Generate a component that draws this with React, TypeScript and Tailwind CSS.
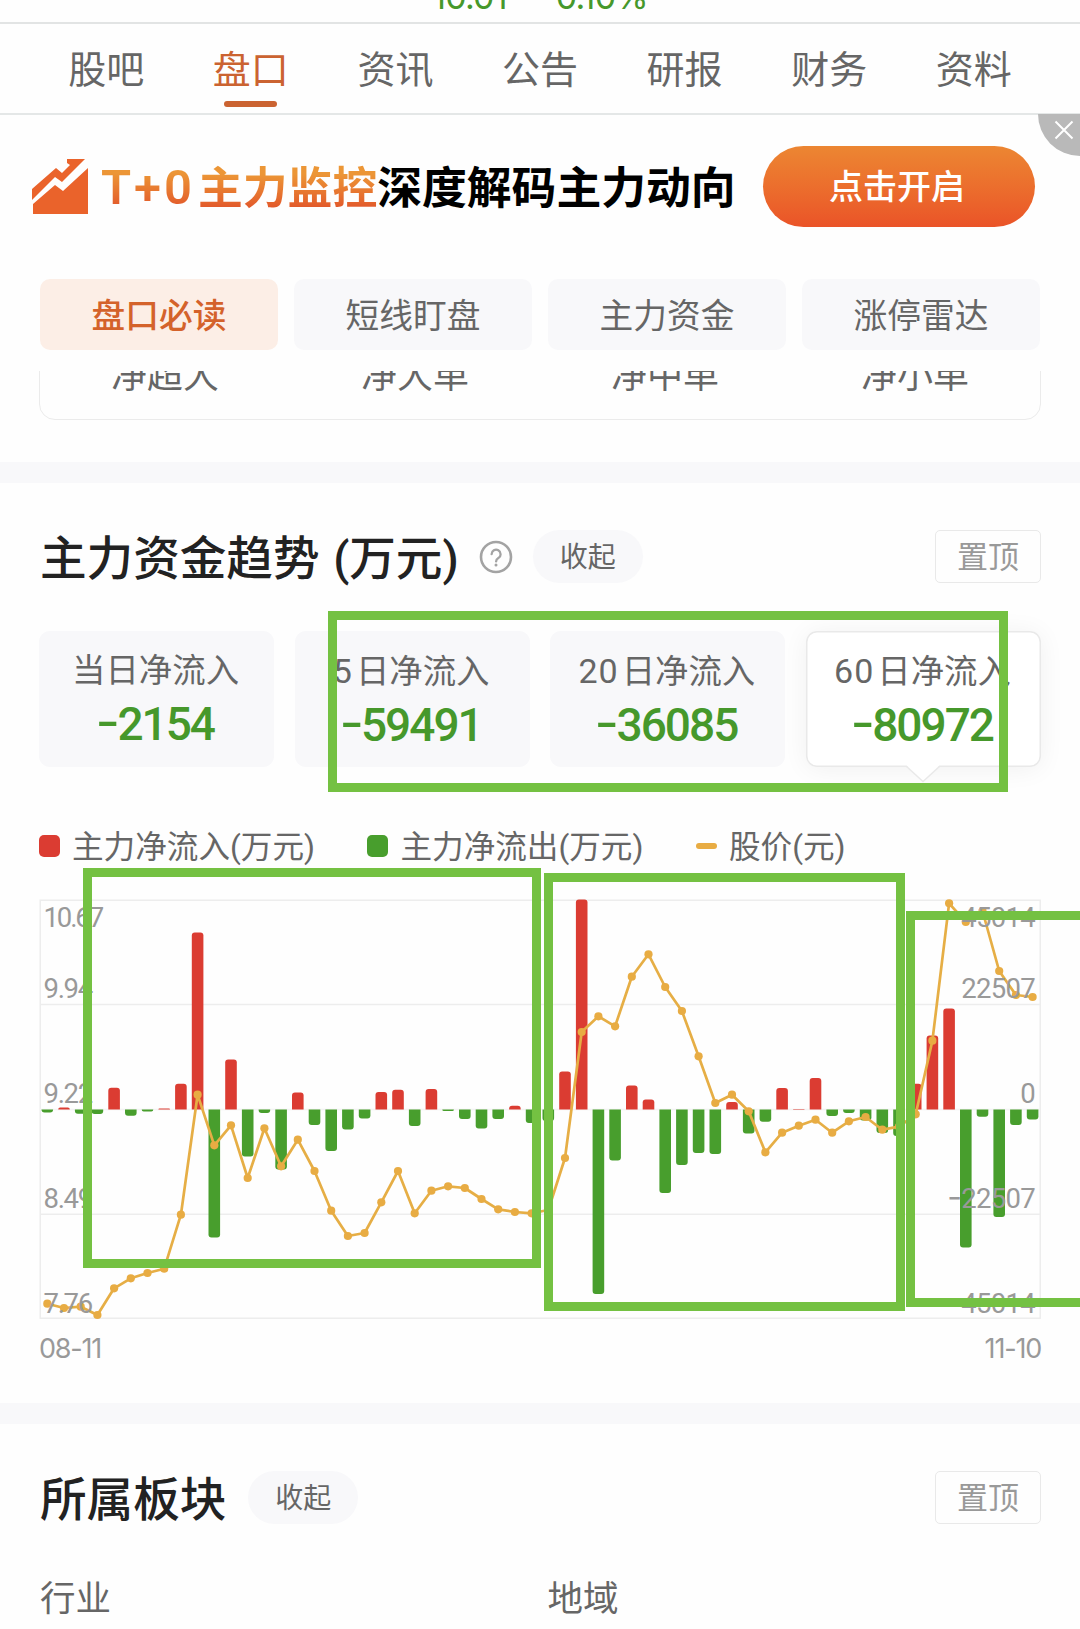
import clsx from "clsx";

const tabs = ["股吧", "盘口", "资讯", "公告", "研报", "财务", "资料"];
const filters = ["盘口必读", "短线盯盘", "主力资金", "涨停雷达"];
const orderTypes = ["净超大", "净大单", "净中单", "净小单"];

const periods = [
  { days: "", label: "当日净流入", value: "2154" },
  { days: "5", label: "日净流入", value: "59491" },
  { days: "20", label: "日净流入", value: "36085" },
  { days: "60", label: "日净流入", value: "80972" },
];

// Bar heights in px, positive = inflow
const flows = [
  -3, 2, -4.3, -4.7, 21.7, -6.3, -2, 1, 25.7, 177, -128, 50, -47, -3.7, -60, 17, -15.7, -41.5, -20, -9,
  17.5, 19.7, -16.7, 20.5, -1.5, -9.7, -19, -9.7, 3.7, -13.5, -11.7, 38, 210, -184.5, -51, 24, 10, -83.5, -55.5, -43.5,
  -44.5, 7.5, -24, -12.3, 21.5, 0.5, 31.3, -6.5, -3.7, -11, -23.5, -26.5, 25.7, 74, 101, -138, -7.3, -107.5, -15.5, -10,
];

// Distance of the price from the chart's top edge
const prices = [
  403.7, 408, 406.7, 415, 388.3, 378.3, 373, 368.7, 314.7, 194.7, 245.3, 225.3, 278, 228.3, 266.3, 239.7, 271, 310.7, 336, 333,
  302.3, 271, 313.3, 290.7, 286.3, 288, 299, 309.3, 312, 313.3, 310, 258, 132, 116.3, 126.3, 76.7, 54.3, 87, 111, 156.3,
  203, 194.7, 211.3, 252.3, 232.7, 225.7, 219.7, 232.7, 221.3, 217, 229.7, 226.7, 214.3, 140.7, 3.3, 22, 11, 71, 95, 97,
];

const leftAxis = ["10.67", "9.94", "9.22", "8.49", "7.76"];
const rightAxis = ["45014", "22507", "0", "-22507", "-45014"];
const labelY = [26.7, 97.5, 202.6, 307.6, 412.6];

const barX = (i: number) => 7.3 + i * 16.7;
const ZERO = 209.4;

function barPath(x: number, v: number) {
  const r = Math.min(3, Math.abs(v));
  const d = v > 0 ? -1 : 1;
  const end = ZERO - v;
  return `M${x - 5.8} ${ZERO}V${end - d * r}Q${x - 5.8} ${end} ${x - 5.8 + r} ${end}H${x + 5.8 - r}Q${x + 5.8} ${end} ${x + 5.8} ${end - d * r}V${ZERO}Z`;
}

function FundChart() {
  return (
    <svg width="1000" height="418" viewBox="0 0 1000 418" className="block overflow-visible">
      <g fill="none" stroke="#ededed" strokeWidth="1.5">
        <rect x="0.2" y="0.2" width="1000" height="418" />
        <path d="M0 104.4H1000M0 314.2H1000" />
        <path d={`M0 ${ZERO}H1000`} stroke="#f4f4f4" />
      </g>
      {flows.map((v, i) => (
        <path key={i} d={barPath(barX(i), v)} fill={v > 0 ? "#db3c32" : "#489e2d"} />
      ))}
      <polyline
        points={prices.map((y, i) => `${barX(i)},${y}`).join(" ")}
        fill="none"
        stroke="#e6ae45"
        strokeWidth="2.7"
        strokeLinejoin="round"
      />
      {prices.map((y, i) => (
        <circle key={i} cx={barX(i)} cy={y} r="4.1" fill="#e8ac43" />
      ))}
      <g fill="#999999" fontSize="27.5">
        {leftAxis.map((t, i) => (
          <text key={t} x="3.5" y={labelY[i]} letterSpacing={i === 0 ? "-2.1" : "-1.3"}>{t}</text>
        ))}
        {rightAxis.map((t, i) => (
          <text key={t} x="995" y={labelY[i]} textAnchor="end" letterSpacing="-0.7">
            {t.startsWith("-") ? <tspan className="font-[Inter]" fontSize="32">-</tspan> : null}
            {t.replace("-", "")}
          </text>
        ))}
      </g>
    </svg>
  );
}

function SectionHeader({ title, help }: { title: string; help?: boolean }) {
  return (
    <div className="flex h-[53px] items-center">
      <h2 className="ml-px pt-[5px] text-[46.6px] leading-none font-medium whitespace-pre text-[#222] [word-spacing:2px]">{title}</h2>
      {help && (
        <svg width="34" height="34" viewBox="0 0 34 34" className="ml-[20px]" fill="none" stroke="#a3a3a3" strokeWidth="2.6">
          <circle cx="17" cy="17" r="15" />
          <path d="M12.6 14.2a4.5 4.5 0 1 1 6.8 3.9c-1.5.9-2.3 1.6-2.3 3.3" strokeWidth="2.3" strokeLinecap="round" />
          <circle cx="17" cy="25" r="1.5" fill="#a3a3a3" stroke="none" />
        </svg>
      )}
      <button
        className={clsx(
          "h-[53px] w-[110px] rounded-full bg-[#f8f8fa] pt-[2px] text-[28px] leading-none text-[#666]",
          help ? "ml-[20px]" : "ml-[22px]"
        )}
      >
        收起
      </button>
      <button className="ml-auto h-[53px] w-[106px] rounded-[5px] border-[1.5px] border-[#e9e9e9] pt-[2px] text-[31px] leading-none text-[#999]">置顶</button>
    </div>
  );
}

function Legend({ color, text, line }: { color: string; text: string; line?: boolean }) {
  return (
    <div className="flex items-center gap-[12px]">
      <span className={clsx("w-[21px]", line ? "h-[6px] rounded-[3px]" : "h-[22px] rounded-[5px]", color)} />
      <span className="pt-[3px]">{text}</span>
    </div>
  );
}

export default function App() {
  return (
    <div className="relative h-[1629px] w-[1080px] overflow-hidden bg-[#fefefe] font-['Roboto','Noto_Sans_CJK_SC',sans-serif] text-[#666]">
      {/* Index quote, scrolled almost out of view */}
      <div className="flex h-[24px] items-end justify-center gap-[49px] overflow-hidden border-b-2 border-[#e2e4e4] pb-[13px] font-[Inter] text-[34px] leading-[24px] tracking-[-0.8px] text-[#46982b]">
        <span>10.01</span>
        <span>0.10%</span>
      </div>

      <nav className="flex h-[91px] border-b-2 border-[#e4e7e7] px-[34px]">
        {tabs.map((tab) => (
          <div key={tab} className={clsx("flex flex-1 flex-col items-center pt-[26px] text-[38px] leading-[40px]", tab === "盘口" && "text-[#cb6331]")}>
            {tab}
            {tab === "盘口" && <span className="mt-[11px] h-[6px] w-[53px] rounded-full bg-[#cb6331]" />}
          </div>
        ))}
      </nav>

      {/* Promo banner */}
      <div className="relative flex h-[164px] items-start pt-[31px] pl-[32px]">
        <svg width="57" height="56" viewBox="0 0 57 56" className="mt-[13px]" fill="#ea632b">
          <path d="M0 30L24 9L30 14L38 6L35 4V0H53L30 23L23 18L0 41Z" />
          <path d="M1 45L23 26L31 32L56 9V55H1Z" />
        </svg>
        <div className="ml-[12px] flex h-[81px] w-[635px] items-baseline pt-[12px] text-[44.8px] leading-[60px] font-bold whitespace-nowrap">
          <span className="w-[97px] bg-gradient-to-b from-[#ec9636] from-25% to-[#e25a2b] to-80% bg-clip-text text-[49px] font-semibold tracking-[3px] text-transparent">T+0</span>
          <span className="bg-gradient-to-b from-[#ec9636] from-25% to-[#e25a2b] to-80% bg-clip-text text-transparent">主力监控</span>
          <span className="text-black">深度解码主力动向</span>
        </div>
        <button className="ml-[27px] h-[81px] w-[272px] rounded-full bg-gradient-to-b from-[#ec8632] to-[#ea5328] pr-[4px] text-[34px] leading-none font-medium text-white">
          点击开启
        </button>
        <div className="absolute top-[-1px] right-0 h-[42px] w-[42px] rounded-bl-full bg-[#b9b9b9]">
          <svg width="20" height="20" viewBox="0 0 20 20" className="absolute top-[6px] left-[16px]" stroke="#fff" strokeWidth="2">
            <path d="M1.5 1.5L18.5 18.5M18.5 1.5L1.5 18.5" />
          </svg>
        </div>
      </div>

      <div className="grid grid-cols-4 gap-[16px] px-[40px]">
        {filters.map((f, i) => (
          <button
            key={f}
            className={clsx(
              "h-[71px] rounded-[10px] pt-[4px] text-[33.7px] leading-none",
              i === 0 ? "bg-[#fceee6] font-medium text-[#d4622b]" : "bg-[#f8f8fa]"
            )}
          >
            {f}
          </button>
        ))}
      </div>

      {/* Bottom of the order table, cut by the sticky filters */}
      <div className="mx-[39px] mt-[21px] h-[50px] overflow-hidden">
        <div className="mt-[-30px] grid h-[79px] grid-cols-4 rounded-[16px] border-[1.5px] border-[#ebebeb] pt-[14px] text-center text-[36px] leading-[40px]">
          {orderTypes.map((t) => (
            <span key={t}>{t}</span>
          ))}
        </div>
      </div>
      <div className="mt-[41px] h-[21px] bg-[#f8f8fa]" />

      <section className="px-[39px] pt-[47px]">
        <SectionHeader title="主力资金趋势 (万元)" help />

        <div className="mt-[48px] grid grid-cols-4 gap-[20.5px]">
          {periods.map((p, i) => (
            <div
              key={p.label + p.days}
              className={clsx(
                "relative flex h-[136px] flex-col items-center rounded-[11px]",
                i === 3 ? "bg-white shadow-[inset_0_0_0_1.5px_#e9e9e9,0_2px_26px_rgba(0,0,0,0.06)]" : "bg-[#f8f8fa]"
              )}
            >
              <span className="mt-[20px] pr-[2px] text-[33.4px] leading-[40px] whitespace-nowrap">
                {p.days && <span className="mr-[3px] text-[34px] tracking-[1px]">{p.days}</span>}
                {p.label}
              </span>
              <span className="mt-[10px] flex pr-[2px] text-[46px] leading-[46px] font-medium tracking-[-2px] text-[#46982b]">
                <span className="mt-[-3px] mr-[1px] inline-block scale-x-115 font-[Inter]">-</span>
                {p.value}
              </span>
              {i === 3 && (
                <svg width="34" height="18" viewBox="0 0 34 18" className="absolute top-[134px] left-[100px]">
                  <path d="M0 0L17 16L34 0Z" fill="#fff" />
                  <path d="M0 1L17 16.5L34 1" fill="none" stroke="#e9e9e9" strokeWidth="1.3" />
                </svg>
              )}
            </div>
          ))}
        </div>

        <div className="mt-[59px] flex h-[40px] items-center gap-[52.5px] text-[31.6px] leading-none">
          <Legend color="bg-[#db3c32]" text="主力净流入(万元)" />
          <Legend color="bg-[#489e2d]" text="主力净流出(万元)" />
          <Legend color="bg-[#e8ac43]" text="股价(元)" line />
        </div>

        <div className="mt-[34px] pl-px">
          <FundChart />
          <div className="mt-[15px] ml-[-1px] flex justify-between font-[Inter] text-[27px] leading-[32px] tracking-[-1.2px] text-[#999]">
            <span>08-11</span>
            <span>11-10</span>
          </div>
        </div>
      </section>

      <div className="mt-[38px] h-[21px] bg-[#f8f8fa]" />

      <section className="px-[39px] pt-[47px]">
        <SectionHeader title="所属板块" />
        <div className="mt-[55px] grid grid-cols-2 pl-px text-[35.5px] leading-[40px]">
          <span>行业</span>
          <span className="pl-[7px]">地域</span>
        </div>
      </section>

      {/* Hand-drawn marker frames over the page */}
      <div className="absolute top-[611px] left-[328px] h-[181px] w-[680px] border-[9px] border-[#74c142]" />
      <div className="absolute top-[868px] left-[83px] h-[400px] w-[458px] border-[9px] border-[#74c142]" />
      <div className="absolute top-[873px] left-[544px] h-[438px] w-[361px] border-[9px] border-[#74c142]" />
      <div className="absolute top-[911px] left-[906px] h-[396px] w-[190px] border-[9px] border-[#74c142]" />
    </div>
  );
}
